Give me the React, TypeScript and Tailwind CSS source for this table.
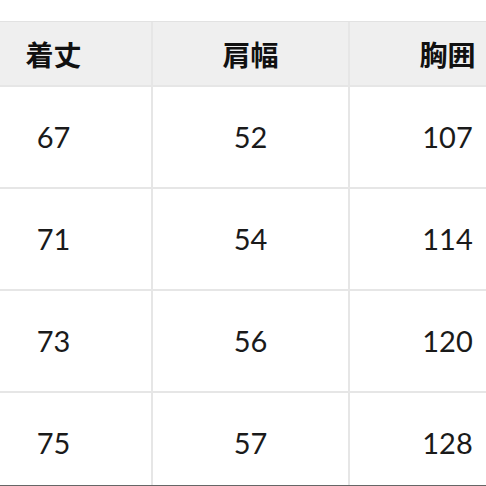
import React from 'react';

const headers = ['着丈', '肩幅', '胸囲'];
const rows = [
  ['67', '52', '107'],
  ['71', '54', '114'],
  ['73', '56', '120'],
  ['75', '57', '128'],
];

export default function App() {
  return (
    <div className="relative w-[486px] h-[486px] overflow-hidden bg-white">
      <div className="pt-[21px] -ml-[44px]">
        <div className="grid grid-cols-[195px_195px_195px] gap-[2px] bg-[#e6e6e6] border-t border-[#e2e2e2] w-max">
          {/* Header */}
          {headers.map((h) => (
            <div
              key={h}
              className="h-[63px] bg-[#efefef] flex items-center justify-center text-[28px] font-bold text-[#111]"
              style={{ fontFamily: '"Noto Sans CJK JP", "Noto Sans", sans-serif' }}
            >
              {h}
            </div>
          ))}
          {rows.map((r, i) =>
            r.map((v, j) => (
              <div
                key={`${i}-${j}`}
                className="h-[100px] bg-white flex items-center justify-center text-[29px] text-[#1a1a1a]"
                style={{ fontFamily: 'Lato, "Noto Sans", sans-serif' }}
              >
                {v}
              </div>
            ))
          )}
        </div>
      </div>
      <div className="absolute left-0 right-0 bottom-0 h-px bg-[#666]" />
    </div>
  );
}
